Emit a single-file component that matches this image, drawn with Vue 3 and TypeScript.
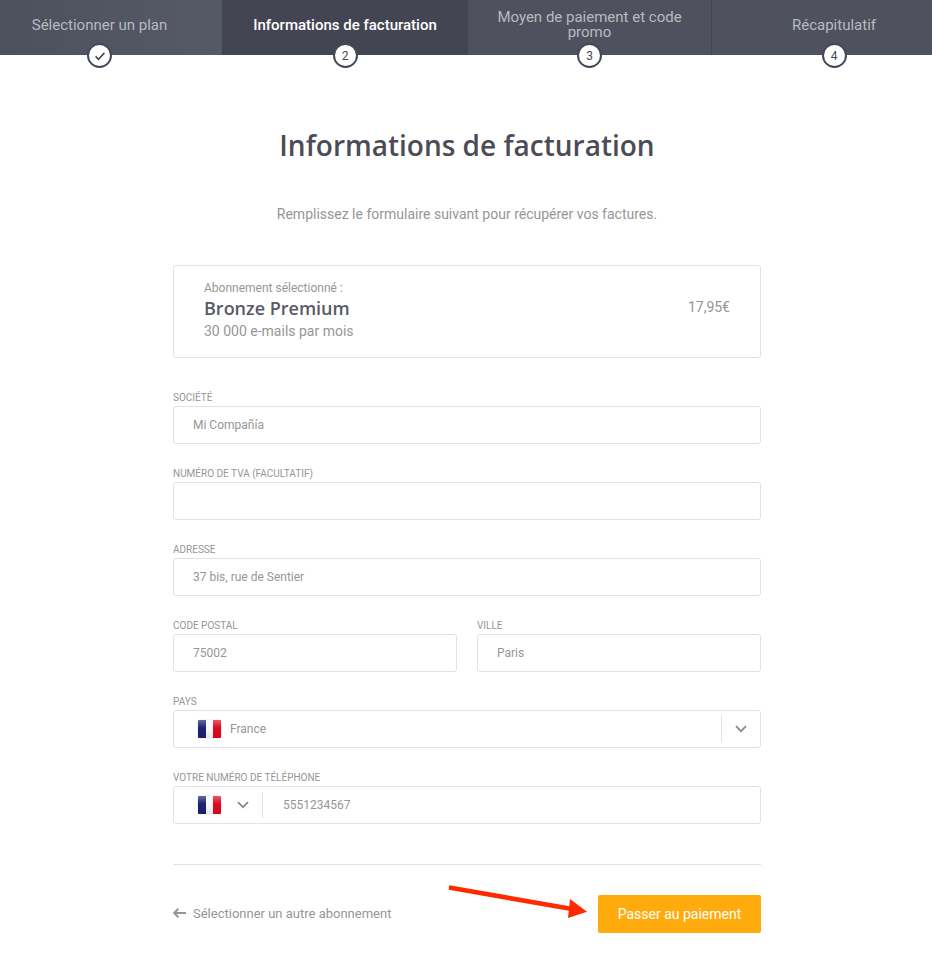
<script setup lang="ts">
interface Step { label: string; mark: string; state: string }
const steps: Step[] = [
  { label: 'Sélectionner un plan', mark: '', state: 'done' },
  { label: 'Informations de facturation', mark: '2', state: 'active' },
  { label: 'Moyen de paiement et code promo', mark: '3', state: 'todo' },
  { label: 'Récapitulatif', mark: '4', state: 'todo' },
]
</script>

<template>
  <div class="page">
    <nav class="steps">
      <div v-for="s in steps" :key="s.label" class="step" :class="s.state">
        <span class="step-label">{{ s.label }}</span>
        <span class="bubble">
          <svg v-if="!s.mark" width="12" height="12" viewBox="0 0 12 12"><path d="M1.6 6.4 4.5 9.3 10.4 2.9" fill="none" stroke="#454857" stroke-width="1.6"/></svg>
          <template v-else>{{ s.mark }}</template>
        </span>
      </div>
    </nav>

    <main class="content">
      <h1>Informations de facturation</h1>
      <p class="intro">Remplissez le formulaire suivant pour récupérer vos factures.</p>

      <section class="plan">
        <div>
          <div class="plan-over">Abonnement sélectionné :</div>
          <div class="plan-name">Bronze Premium</div>
          <div class="plan-sub">30 000 e-mails par mois</div>
        </div>
        <div class="plan-price">17,95€</div>
      </section>

      <form class="form" @submit.prevent>
        <div class="field">
          <label>SOCIÉTÉ</label>
          <div class="box">Mi Compañía</div>
        </div>
        <div class="field">
          <label>NUMÉRO DE TVA (FACULTATIF)</label>
          <div class="box"></div>
        </div>
        <div class="field">
          <label>ADRESSE</label>
          <div class="box">37 bis, rue de Sentier</div>
        </div>
        <div class="pair">
          <div class="field">
            <label>CODE POSTAL</label>
            <div class="box">75002</div>
          </div>
          <div class="field">
            <label>VILLE</label>
            <div class="box">Paris</div>
          </div>
        </div>
        <div class="field">
          <label>PAYS</label>
          <div class="box country">
            <span class="flag"></span>
            <span class="country-name">France</span>
            <span class="select-btn">
              <svg width="12" height="8" viewBox="0 0 12 8"><path d="M1 1.2 6 6.2 11 1.2" fill="none" stroke="#85878e" stroke-width="1.7"/></svg>
            </span>
          </div>
        </div>
        <div class="field">
          <label>VOTRE NUMÉRO DE TÉLÉPHONE</label>
          <div class="box phone">
            <span class="dial">
              <span class="flag"></span>
              <svg width="12" height="8" viewBox="0 0 12 8"><path d="M1 1.2 6 6.2 11 1.2" fill="none" stroke="#85878e" stroke-width="1.7"/></svg>
            </span>
            <span class="phone-num">5551234567</span>
          </div>
        </div>
      </form>

      <footer class="actions">
        <a class="back">
          <svg width="13" height="10" viewBox="0 0 13 10"><path d="M5.4 .8 1.2 5 5.4 9.2M1.4 5H13" fill="none" stroke="#959595" stroke-width="2"/></svg>
          Sélectionner un autre abonnement
        </a>
        <button class="pay" type="button">Passer au paiement</button>
        <svg class="arrow" width="146" height="36" viewBox="0 0 146 36">
          <path d="M1 2.5 127 24.5" fill="none" stroke="#ff2a00" stroke-width="4.6"/>
          <path d="M122 14 139 26.7 120 33Z" fill="#ff2a00"/>
        </svg>
      </footer>
    </main>
  </div>
</template>

<style scoped>
.page {
  width: 932px;
  height: 962px;
  background: #fff;
  font-family: Roboto, "Liberation Sans", sans-serif;
  color: #969696;
  overflow: hidden;
}
.steps {
  display: grid;
  grid-template-columns: 245px 245px 244px 245px;
  width: 979px;
  margin-left: -23px;
  height: 55px;
}
.step {
  position: relative;
  display: flex;
  align-items: center;
  justify-content: center;
  padding: 0 22px 5px;
  background: #4f515e;
  color: #b9bac0;
  font-size: 15px;
  line-height: 15px;
  text-align: center;
  border-left: 1px solid #434552;
}
.step.done {
  background: linear-gradient(90deg, #4c4f5c, #565966);
  border-left: 0;
}
.step.active {
  background: #434553;
  color: #fff;
  font-weight: 500;
}
.step-label { display: block; }
.bubble {
  position: absolute;
  left: 50%;
  top: 43px;
  width: 25px;
  height: 25px;
  margin-left: -12.5px;
  box-sizing: border-box;
  border: 2px solid #454857;
  border-radius: 50%;
  background: #fff;
  color: #454857;
  font-size: 12px;
  font-weight: 400;
  display: flex;
  align-items: center;
  justify-content: center;
  line-height: 1;
}
.content {
  width: 588px;
  margin-left: 173px;
  padding-top: 71px;
}
h1 {
  margin: 0;
  font-family: "Open Sans", "Noto Sans", sans-serif;
  font-size: 28px;
  font-weight: 600;
  line-height: 38px;
  color: #4b4c56;
  text-align: center;
}
.intro {
  margin: 40px 0 0;
  font-size: 14px;
  line-height: 20px;
  text-align: center;
  color: #969696;
}
.plan {
  margin-top: 41px;
  height: 93px;
  box-sizing: border-box;
  border: 1px solid #e1e2e7;
  border-radius: 3px;
  padding: 14px 30px;
  display: flex;
  justify-content: space-between;
}
.plan-over {
  font-size: 12px;
  line-height: 16px;
}
.plan-name {
  font-family: "Open Sans", "Noto Sans", sans-serif;
  font-size: 18px;
  font-weight: 600;
  line-height: 24px;
  color: #595a64;
}
.plan-sub {
  margin-top: 2px;
  font-size: 14px;
  line-height: 18px;
}
.plan-price {
  margin-top: 18px;
  font-size: 14px;
  line-height: 18px;
}
.form {
  margin-top: 32px;
  display: flex;
  flex-direction: column;
  gap: 22px;
}
.field {
  display: flex;
  flex-direction: column;
  gap: 1px;
}
label {
  font-size: 10px;
  line-height: 15px;
  color: #969696;
}
.box {
  height: 38px;
  box-sizing: border-box;
  border: 1px solid #e1e2e7;
  border-radius: 3px;
  padding: 0 19px;
  display: flex;
  align-items: center;
  font-size: 12px;
  color: #969696;
}
.pair {
  display: grid;
  grid-template-columns: 284px 284px;
  gap: 20px;
}
.flag {
  display: block;
  flex: none;
  width: 23px;
  height: 18px;
  border-radius: 1px;
  background:
    linear-gradient(180deg, rgba(255,255,255,.32), rgba(255,255,255,0) 45%, rgba(0,0,0,.08)),
    linear-gradient(90deg, #1b2270 0 33%, #fafafa 33% 67%, #e0091f 67%);
  box-shadow: 0 0 1px rgba(0,0,0,.45);
}
.country { padding: 0 0 0 24px; }
.country-name { margin-left: 9px; }
.select-btn {
  margin-left: auto;
  width: 38px;
  height: 26px;
  border-left: 1px solid #e1e2e7;
  display: flex;
  align-items: center;
  justify-content: center;
}
.phone { padding: 0 0 0 24px; }
.dial {
  display: flex;
  align-items: center;
  gap: 16px;
  width: 64px;
  height: 26px;
  border-right: 1px solid #e1e2e7;
}
.phone-num { margin-left: 20px; }
.actions {
  position: relative;
  margin-top: 40px;
  height: 70px;
  box-sizing: border-box;
  border-top: 1px solid #e1e2e7;
  padding-top: 30px;
  display: flex;
  justify-content: space-between;
  align-items: flex-start;
}
.back {
  display: flex;
  align-items: center;
  gap: 7px;
  height: 36px;
  font-size: 13px;
  color: #969696;
}
.pay {
  width: 163px;
  height: 38px;
  border: 0;
  border-radius: 2px;
  background: #ffab0d;
  color: #fff;
  font-family: inherit;
  font-size: 14px;
  padding: 0;
}
.arrow {
  position: absolute;
  left: 275px;
  top: 20px;
}
</style>
